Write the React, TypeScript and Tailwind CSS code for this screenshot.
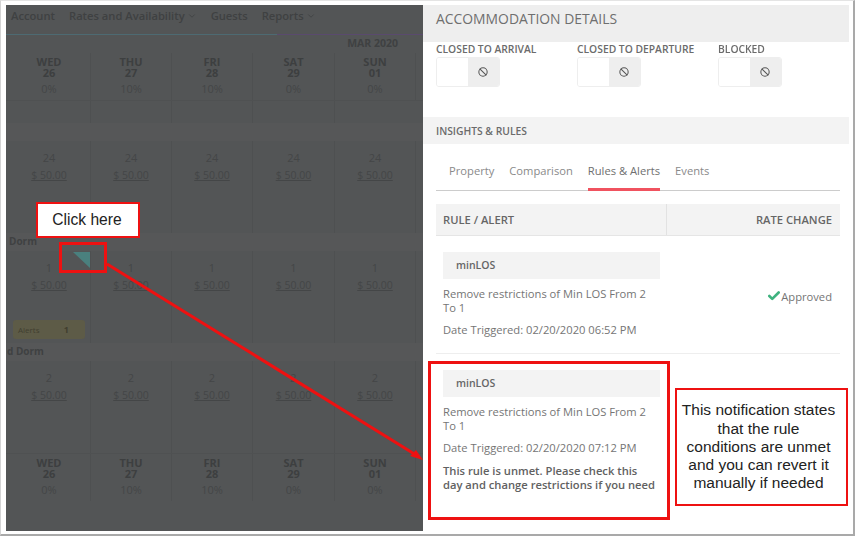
import { Ban, Check, ChevronDown } from "lucide-react";

const days = [
  { name: "WED", date: "26", pct: "0%" },
  { name: "THU", date: "27", pct: "10%" },
  { name: "FRI", date: "28", pct: "10%" },
  { name: "SAT", date: "29", pct: "0%" },
  { name: "SUN", date: "01", pct: "0%" },
];

const gridCols = "grid grid-cols-[84px_81px_81px_82px_81px_8px]";

const DayHeader = ({ className }: { className: string }) => (
  <div className={`${gridCols} ${className}`}>
    {days.map((d, i) => (
      <div key={d.name} className={`flex flex-col items-center pt-[3px] text-[#3d3f40] ${i === 0 ? "pl-[2px]" : "border-l border-[#4e5051]"}`}>
        <span className="text-[11px] leading-[11px] font-bold">{d.name}</span>
        <span className="text-[11px] leading-[11px] font-bold">{d.date}</span>
        <span className="mt-[4px] text-[11px] leading-[14px] text-[#444647]">{d.pct}</span>
      </div>
    ))}
    <div className="border-l border-[#4e5051]" />
  </div>
);

const RateRow = ({ count, badge }: { count: string; badge?: boolean }) => (
  <div className={`${gridCols} h-[92px]`}>
    {days.map((d, i) => (
      <div key={d.name} className={`relative flex flex-col items-center pt-[9px] text-[#444647] ${i === 0 ? "pl-[2px]" : "border-l border-[#4e5051]"}`}>
        <span className="text-[11px] leading-[15px]">{count}</span>
        <span className="mt-[3px] text-[10.5px] leading-[15px] underline">$ 50.00</span>
        {badge && i === 0 && (
          <div className="absolute top-[69px] left-[7px] flex h-[19px] w-[72px] items-center justify-between rounded-[3px] bg-[#5d5b47] pr-[16px] pl-[5px] text-[#413f30]">
            <span className="text-[8px]">Alerts</span>
            <span className="text-[9px] font-bold">1</span>
          </div>
        )}
      </div>
    ))}
    <div className="border-l border-[#4e5051]" />
  </div>
);

const Toggle = ({ label }: { label: string }) => (
  <div className="w-[141px] shrink-0">
    <div className="text-[10.3px] leading-[14px] font-semibold text-[#6b6b6b]">{label}</div>
    <div className="mt-[1px] flex h-[30px] w-[64px] overflow-hidden rounded-[3px] border border-[#eeeeee]">
      <div className="w-[31px] bg-white" />
      <div className="flex flex-1 items-center justify-center pr-[2px] pb-[1px] bg-[#eeeeee] text-[#555555]">
        <Ban size={10} strokeWidth={2.5} />
      </div>
    </div>
  </div>
);

const RuleText = ({ time }: { time: string }) => (
  <div className="text-[11.2px] text-[#757575]">
    <p className="mt-[8px] w-[210px] leading-[14px]">Remove restrictions of Min LOS From 2 To 1</p>
    <p className="mt-[8px] leading-[14px] whitespace-nowrap">Date Triggered: 02/20/2020 {time}</p>
  </div>
);

export default function App() {
  return (
    <div className="relative h-[538px] w-[855px] overflow-hidden bg-white font-['Open_Sans',sans-serif]">
      <div className="h-[536px] w-[855px] border-t border-r-2 border-b-2 border-l border-t-[#e4e4e4] border-r-[#a9a9a9] border-b-[#a9a9a9] border-l-[#d4d4d4] pt-[4px] pl-[5px]">
        <div className="flex h-[526px] blur-[0.5px]">
          {/* dimmed calendar */}
          <div className="relative h-full w-[417px] overflow-hidden bg-[#535556]">
            <div className="flex h-[29px] items-start gap-[14px] pt-[4px] pl-[5px] text-[11.2px] leading-[14px] font-semibold text-[#3f4142]">
              <span>Account</span>
              <span className="flex items-center gap-[2px]">
                Rates and Availability <ChevronDown size={10} />
              </span>
              <span>Guests</span>
              <span className="flex items-center gap-[2px]">
                Reports <ChevronDown size={10} />
              </span>
            </div>
            <div className="flex h-[1px]">
              <div className="w-[271px] bg-[#4d6a72]" />
              <div className="flex-1 bg-[#5a4a6e]" />
            </div>
            <div className="flex h-[18px] items-center justify-end pr-[25px] text-[10.5px] font-bold text-[#3f4142]">MAR 2020</div>
            <DayHeader className="h-[47px]" />
            <div className={`${gridCols} h-[23px] border-t border-[#4f5152]`}>
              {days.map((d, i) => (
                <div key={d.name} className={i === 0 ? "" : "border-l border-[#4e5051]"} />
              ))}
            </div>
            <div className="h-[18px] bg-[#565758]" />
            <RateRow count="24" />
            <div className="h-[18px] bg-[#565758] pl-[3px] text-[10px] leading-[17px] font-bold text-[#3f4142]">Dorm</div>
            <RateRow count="1" badge />
            <div className="h-[18px] bg-[#565758] pl-[1px] text-[10px] leading-[17px] font-bold text-[#3f4142]">d Dorm</div>
            <RateRow count="2" />
            <DayHeader className="h-[48px] border-t border-[#4f5152]" />
          </div>

          {/* accommodation details panel */}
          <div className="w-[426px] bg-white">
            <div className="flex h-[37px] items-start bg-[#eeeeee] pt-[4px] pl-[13px] text-[13.9px] leading-[19px] text-[#6f6f6f]">ACCOMMODATION DETAILS</div>
            <div className="flex pl-[13px]">
              <Toggle label="CLOSED TO ARRIVAL" />
              <Toggle label="CLOSED TO DEPARTURE" />
              <Toggle label="BLOCKED" />
            </div>
            <div className="mt-[30px] flex h-[27px] items-center bg-[#f3f3f3] pt-[2px] pl-[13px] text-[10.3px] font-semibold text-[#6b6b6b]">INSIGHTS &amp; RULES</div>
            <div className="mx-[13px] mt-[16px] flex h-[31px] w-[404px] items-start gap-[15px] border-b border-[#cccccc] pl-[13px] text-[11.2px] leading-[22px] text-[#8a8a8a]">
              <span>Property</span>
              <span>Comparison</span>
              <span className="h-[31px] border-b-[3px] border-[#f0525f] text-[#6f6f6f]">Rules &amp; Alerts</span>
              <span>Events</span>
            </div>
            <div className="mx-[13px] mt-[13px] flex h-[32px] w-[404px] items-center border-b border-[#e5e5e5] bg-[#f3f3f3] text-[11.2px] font-semibold text-[#666666]">
              <div className="flex h-full w-[231px] items-center border-r border-[#e2e2e2] pt-[1px] pl-[7px]">RULE / ALERT</div>
              <div className="flex-1 pt-[1px] pr-[8px] text-right">RATE CHANGE</div>
            </div>
            <div className="mx-[13px] flex h-[118px] w-[404px] border-b border-[#eeeeee] pt-[16px] pl-[7px]">
              <div className="w-[217px]">
                <div className="flex h-[27px] items-center bg-[#f3f3f3] pl-[13px] text-[10.5px] font-semibold text-[#666666]">minLOS</div>
                <RuleText time="06:52 PM" />
              </div>
              <div className="flex flex-1 items-start justify-end pt-[37px] pr-[8px] text-[11.2px] text-[#757575]">
                <Check size={14} strokeWidth={4.5} className="text-[#3fb27f]" />
                Approved
              </div>
            </div>
            <div className="mt-[16px] ml-[20px] w-[217px]">
              <div className="flex h-[27px] items-center bg-[#f3f3f3] pl-[13px] text-[10.5px] font-semibold text-[#666666]">minLOS</div>
              <RuleText time="07:12 PM" />
              <p className="mt-[9px] text-[11.2px] leading-[14px] font-semibold whitespace-nowrap text-[#616161]">
                This rule is unmet. Please check this
                <br />
                day and change restrictions if you need
              </p>
            </div>
          </div>
        </div>
      </div>

      {/* annotations */}
      <div className="absolute top-[202px] left-[36px] flex h-[36px] w-[104px] items-center justify-center border-2 border-[#ee1111] bg-white pr-[2px] font-['Liberation_Sans',sans-serif] text-[15.6px] text-[#222222]">Click here</div>
      <div className="absolute top-[242px] left-[59px] h-[31px] w-[48px] border-[3px] border-[#ee1111]" />
      <svg className="absolute top-0 left-0" width="855" height="538" viewBox="0 0 855 538">
        <polygon points="73,252 90,252 90,268" fill="#4a807e" />
        <line x1="107" y1="264" x2="416" y2="455" stroke="#ee1111" strokeWidth="3" />
        <polygon points="423,460 410,456 416,450" fill="#ee1111" />
      </svg>
      <div className="absolute top-[361px] left-[428px] h-[159px] w-[242px] border-[3px] border-[#ee1111]" />
      <div className="absolute top-[388px] left-[675px] flex h-[118px] w-[173px] items-center justify-center border-2 border-[#ee1111] bg-white pr-[6px] text-center font-['Liberation_Sans',sans-serif] text-[15.5px] leading-[18.2px] whitespace-nowrap text-[#222222]">
        <p>
          This notification states
          <br />
          that the rule
          <br />
          conditions are unmet
          <br />
          and you can revert it
          <br />
          manually if needed
        </p>
      </div>
    </div>
  );
}
